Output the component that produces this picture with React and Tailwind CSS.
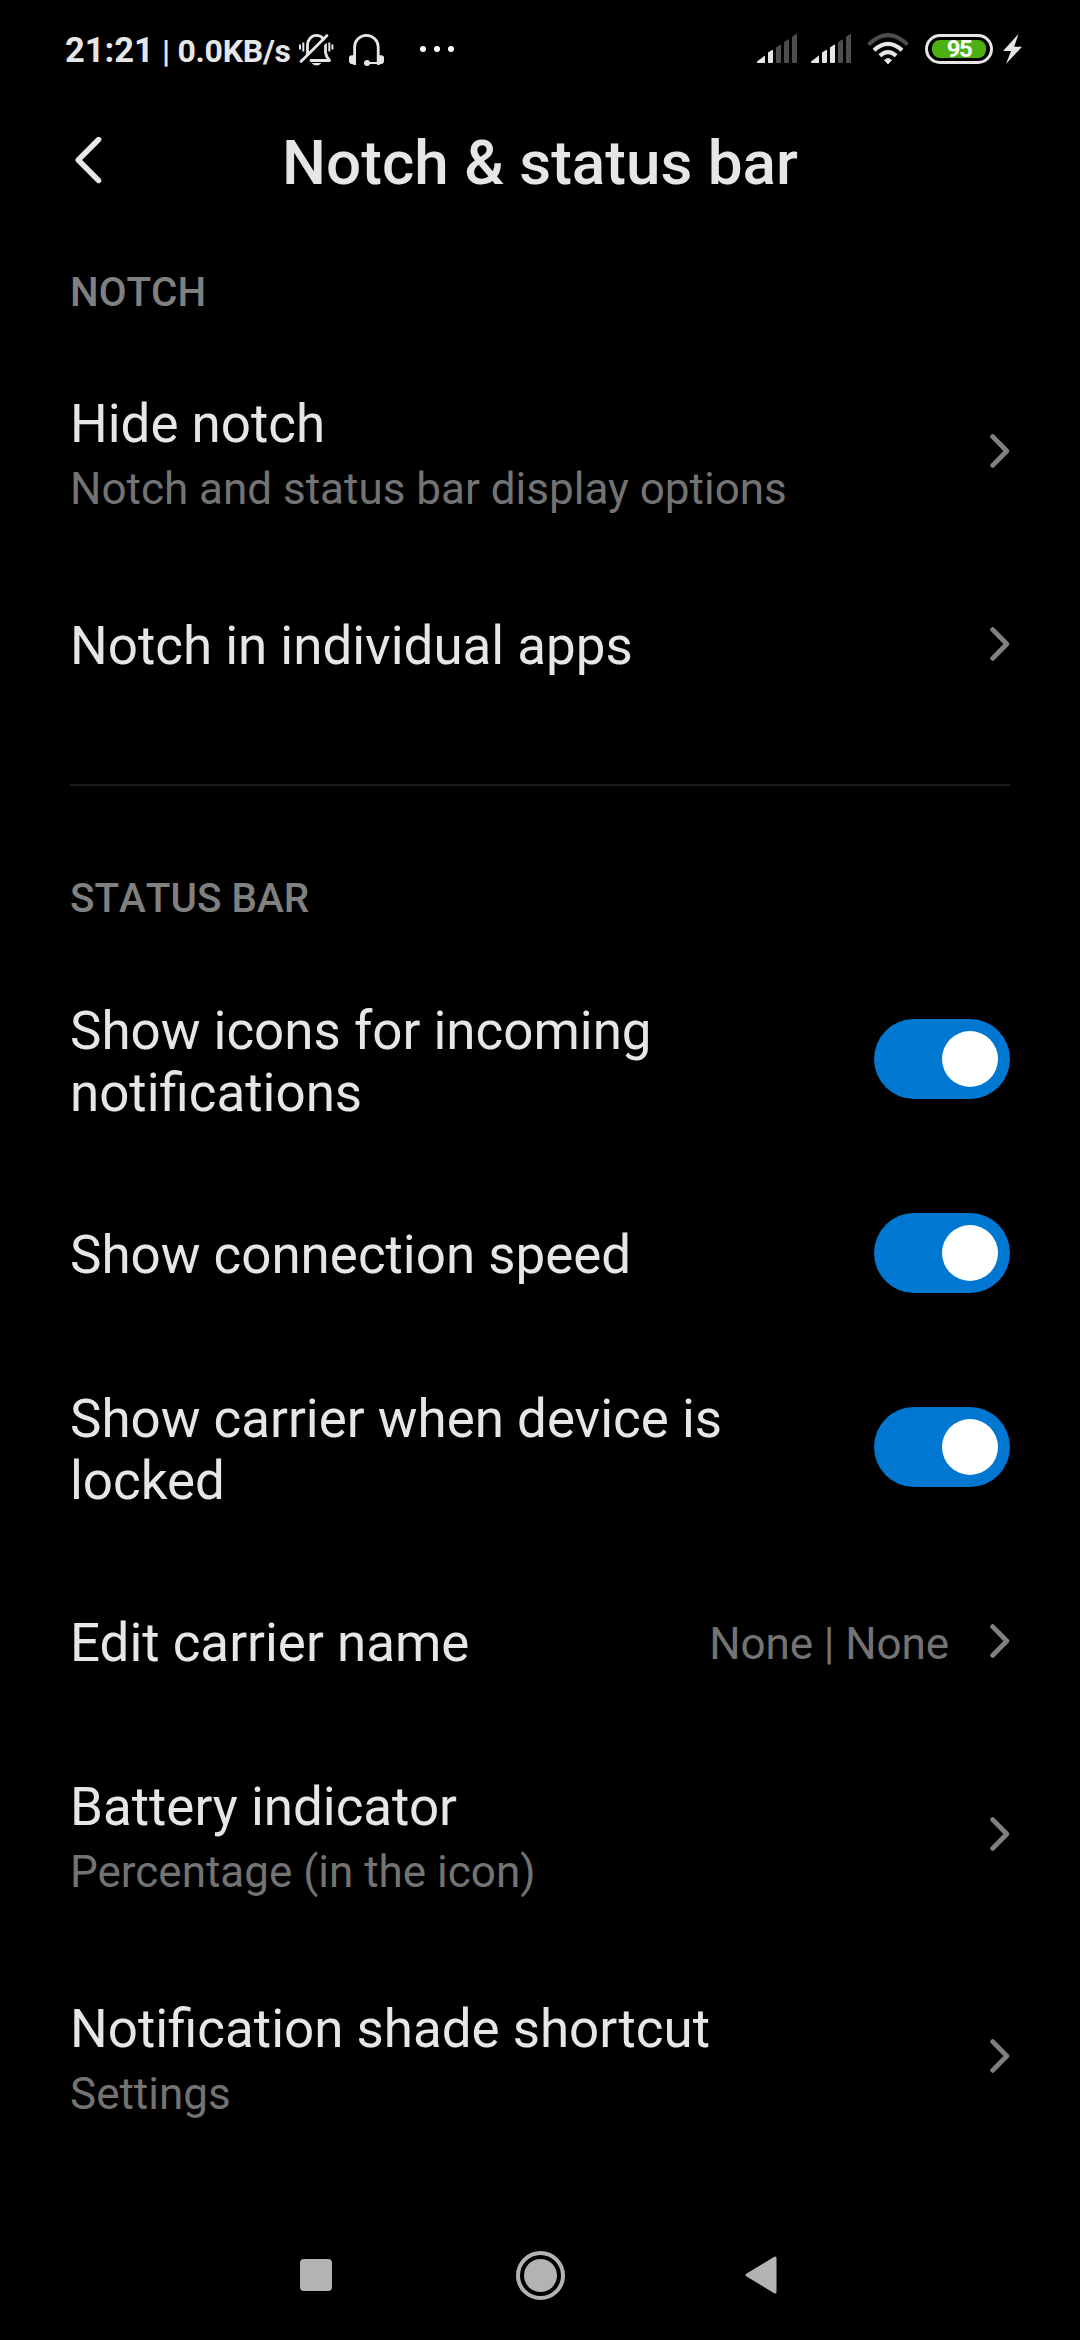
import { useState } from 'react';

const BellOffIcon = () => (
  <svg className="w-[36px] h-[34px]" viewBox="298 32 36 34" fill="none">
    <g stroke="#e6e6e6" strokeWidth="2.8" strokeLinecap="round" strokeLinejoin="round">
      <path d="M307.5 54V45a9 9.6 0 0 1 18 0v7.5q.5 4 4 8H311" />
      <path d="M303.5 63L330 37" stroke="#000" strokeWidth="3.4" strokeLinecap="butt" />
      <path d="M301 61.5L327 35.5" />
    </g>
    <path d="M299 44.5h2v5h-2zM302.3 42.5h2v9h-2zM328.3 42.5h2v9h-2zM331.4 44.5h2v5h-2z" fill="#e6e6e6" />
    <path d="M311.5 63h10q-5 5-10 0z" fill="#e6e6e6" />
  </svg>
);

const HeadsetIcon = () => (
  <svg className="w-[36px] h-[34px]" viewBox="348 32 36 34" fill="none">
    <path d="M354.6 64V47a11.8 11.6 0 0 1 23.6 0v16" stroke="#e6e6e6" strokeWidth="2.8" />
    <path d="M356 55.3h-4.2a2.8 2.8 0 0 0-2.8 2.8v3a2.8 2.8 0 0 0 2.8 2.8l2.6 1.1H356zM377 55.3h4.2a2.8 2.8 0 0 1 2.8 2.8v3a2.8 2.8 0 0 1-2.8 2.8l-2.6 1.1H377z" fill="#e6e6e6" />
    <circle cx="367" cy="63" r="3" fill="#e6e6e6" />
    <path d="M367 63H378" stroke="#e6e6e6" strokeWidth="2" />
  </svg>
);

const SignalIcon = ({ level }) => {
  const bars = [
    'M0 27.5L8 21.5V29H1Q0 29 0 28z',
    'M11 18.5L15 16H16V28Q16 29 15 29H12Q11 29 11 28z',
    'M19 13.5L23 10.8H24V28Q24 29 23 29H20Q19 29 19 28z',
    'M27 8.3L31 5.5H32V28Q32 29 31 29H28Q27 29 27 28z',
    'M35 2.8L39 0H40V28Q40 29 39 29H36Q35 29 35 28z'
  ];

  return (
    <svg className="w-[40px] h-[30px]" viewBox="0 0 40 30">
      {bars.map((d, i) => (
        <path key={d} d={d} fill={i < level ? '#e6e6e6' : '#4d4d4d'} />
      ))}
    </svg>
  );
};

const WifiIcon = () => (
  <svg className="w-[42px] h-[32px]" viewBox="0 0 42 32" fill="none" strokeWidth="4">
    <path d="M1.5 11.6Q21 -7.4 40.5 11.6" stroke="#4d4d4d" />
    <path d="M7 17.2Q21 4.6 35 17.2" stroke="#e6e6e6" />
    <path d="M12.8 22.7Q21 15.4 29.2 22.7" stroke="#e6e6e6" />
    <path d="M17.5 27.3Q21 23.5 24.5 27.3L21 31z" fill="#e6e6e6" stroke="#e6e6e6" strokeWidth="0.8" />
  </svg>
);

const BoltIcon = () => (
  <svg className="w-[19px] h-[30px]" viewBox="0 0 19 30">
    <path d="M15.5 0L0 17H8L3 30L19 12.7H11.2z" fill="#e6e6e6" />
  </svg>
);

const Chevron = () => (
  <svg className="w-[21px] h-[36px] shrink-0" viewBox="0 0 21 36" fill="none">
    <path d="M3.7 3.6L17.8 18L3.7 32.4" stroke="#808080" strokeWidth="4.8" strokeLinecap="round" strokeLinejoin="round" />
  </svg>
);

const Toggle = ({ label }) => {
  const [on, setOn] = useState(true);

  return (
    <button
      role="switch"
      aria-checked={on}
      aria-label={label}
      onClick={() => setOn(!on)}
      className={`flex h-20 w-[136px] shrink-0 items-center rounded-full px-3 ${on ? 'justify-end bg-[#0077d0]' : 'justify-start bg-[#333333]'}`}
    >
      <span className="size-14 rounded-full bg-white" />
    </button>
  );
};

const Row = ({ title, subtitle, value, toggle, height = 'h-[164px]' }) => (
  <div className={`flex items-center justify-between ${height}`}>
    <div className={`max-w-[740px] ${height === 'h-[164px]' ? 'pt-1' : 'pt-[5px]'}`}>
      <div className="text-[52.9px] leading-[62px] text-[#e6e6e6]">{title}</div>
      {subtitle && <div className="mt-2 text-[44px] leading-[52px] text-[#737373]">{subtitle}</div>}
    </div>
    {toggle ? (
      <Toggle label={title} />
    ) : (
      <div className="flex items-center gap-10">
        {value && <span className="pt-[5px] text-[44px] leading-[52px] tracking-[-0.1px] text-[#737373]">{value}</span>}
        <Chevron />
      </div>
    )}
  </div>
);

const SectionTitle = ({ children }) => (
  <h2 className="text-[40.4px] leading-[48px] font-medium text-[#808080] [font-kerning:none]">{children}</h2>
);

const StatusBar = () => (
  <div className="flex h-[98px] items-center justify-between pl-[65px] pr-[58px]">
    <div className="flex items-center">
      <div className="flex items-baseline pt-[3px] font-bold whitespace-nowrap text-[#e6e6e6]">
        <span className="text-[34.5px]">21:21</span>
        <span className="ml-2 text-[32px] tracking-[-0.25px]">| 0.0KB/s</span>
      </div>
      <div className="ml-[7px] flex items-center gap-3.5">
        <BellOffIcon />
        <HeadsetIcon />
      </div>
      <div className="ml-9 flex gap-2">
        <span className="size-1.5 rounded-full bg-white" />
        <span className="size-1.5 rounded-full bg-white" />
        <span className="size-1.5 rounded-full bg-white" />
      </div>
    </div>
    <div className="flex items-center">
      <SignalIcon level={2} />
      <div className="ml-3.5 flex">
        <SignalIcon level={3} />
      </div>
      <div className="ml-4 flex">
        <WifiIcon />
      </div>
      <div className="ml-4 flex h-[30px] w-[68px] items-center justify-center rounded-full border-[3px] border-[#e6e6e6]">
        <div className="flex h-[18px] w-[54px] items-center justify-center rounded-lg bg-[#4caf14] text-[24px] leading-none font-bold tracking-[-1.5px] text-white">
          95
        </div>
      </div>
      <div className="ml-2.5 flex">
        <BoltIcon />
      </div>
    </div>
  </div>
);

const NavBar = () => (
  <div className="mt-auto flex h-[130px] items-center justify-between pr-[303px] pl-[300px]">
    <div className="size-8 rounded-sm bg-[#b3b3b3]" />
    <div className="ml-1 flex size-[49px] items-center justify-center rounded-full border-4 border-[#b3b3b3]">
      <div className="size-[33px] rounded-full bg-[#b3b3b3]" />
    </div>
    <svg className="w-[32px] h-[38px]" viewBox="0 0 32 38">
      <path d="M2 19L30 2V36z" fill="#b3b3b3" stroke="#b3b3b3" strokeWidth="3" strokeLinejoin="round" />
    </svg>
  </div>
);

export default function App() {
  return (
    <div className="flex h-[2340px] w-[1080px] flex-col overflow-hidden bg-black font-['Roboto',sans-serif]">
      <StatusBar />

      {/* Header */}
      <header className="grid h-[122px] grid-cols-[100px_1fr_100px] items-center px-[70px]">
        <svg className="ml-1 w-[30px] h-[50px]" viewBox="0 0 30 50" fill="none">
          <path d="M24.6 5.5L4.2 26L24.6 46.5" stroke="#e6e6e6" strokeWidth="5.4" strokeLinecap="round" strokeLinejoin="round" />
        </svg>
        <h1 className="pt-[7px] text-center text-[62px] leading-[72px] font-medium whitespace-nowrap text-[#e6e6e6]">
          Notch &amp; status bar
        </h1>
      </header>

      <main className="px-[70px]">
        <section className="pt-[49px]">
          <SectionTitle>NOTCH</SectionTitle>
          <div className="pt-[23px]">
            <Row title="Hide notch" subtitle="Notch and status bar display options" height="h-[222px]" />
            <Row title="Notch in individual apps" />
          </div>
        </section>

        <div className="mt-[58px] h-0.5 bg-[#1a1a1a]" />

        <section className="pt-[89px]">
          <SectionTitle>STATUS BAR</SectionTitle>
          <div className="pt-6">
            <Row title="Show icons for incoming notifications" toggle height="h-[224px]" />
            <Row title="Show connection speed" toggle />
            <Row title="Show carrier when device is locked" toggle height="h-[224px]" />
            <Row title="Edit carrier name" value="None | None" />
            <Row title="Battery indicator" subtitle="Percentage (in the icon)" height="h-[222px]" />
            <Row title="Notification shade shortcut" subtitle="Settings" height="h-[222px]" />
          </div>
        </section>
      </main>

      <NavBar />
    </div>
  );
}
